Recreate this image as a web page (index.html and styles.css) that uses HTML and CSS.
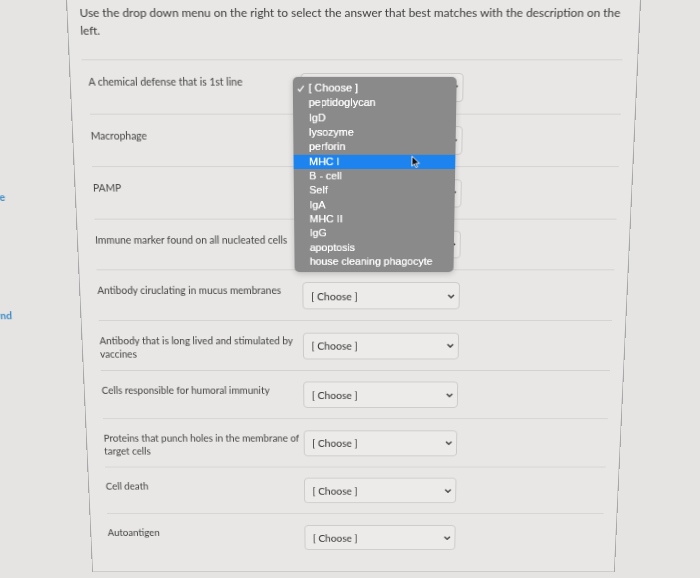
FILE: index.html
```html
<!DOCTYPE html>
<html lang="en">
<head>
  <meta charset="UTF-8">
  <title>Matching Question</title>
  <link rel="stylesheet" href="styles.css">
</head>
<body>
  <div class="stage">
    <div class="side">
      <div class="nav-link first"><span>Home</span></div>
      <div class="nav-link second"><span>Find</span></div>
    </div>

    <div class="card">
      <p class="intro">Use the drop down menu on the right to select the answer that best matches with the description on the left.</p>

      <div class="rows">
        <div class="row">
          <div class="label">A chemical defense that is 1st line</div>
          <div class="select"><span>[ Choose ]</span><svg class="chev" viewBox="0 0 8 5" width="8" height="5"><path d="M1 1l3 3 3-3"/></svg></div>
        </div>
        <div class="row">
          <div class="label">Macrophage</div>
          <div class="select"><span>[ Choose ]</span><svg class="chev" viewBox="0 0 8 5" width="8" height="5"><path d="M1 1l3 3 3-3"/></svg></div>
        </div>
        <div class="row">
          <div class="label">PAMP</div>
          <div class="select"><span>[ Choose ]</span><svg class="chev" viewBox="0 0 8 5" width="8" height="5"><path d="M1 1l3 3 3-3"/></svg></div>
        </div>
        <div class="row">
          <div class="label">Immune marker found on all nucleated cells</div>
          <div class="select"><span>[ Choose ]</span><svg class="chev" viewBox="0 0 8 5" width="8" height="5"><path d="M1 1l3 3 3-3"/></svg></div>
        </div>
        <div class="row">
          <div class="label">Antibody ciruclating in mucus membranes</div>
          <div class="select"><span>[ Choose ]</span><svg class="chev" viewBox="0 0 8 5" width="8" height="5"><path d="M1 1l3 3 3-3"/></svg></div>
        </div>
        <div class="row">
          <div class="label">Antibody that is long lived and stimulated by vaccines</div>
          <div class="select"><span>[ Choose ]</span><svg class="chev" viewBox="0 0 8 5" width="8" height="5"><path d="M1 1l3 3 3-3"/></svg></div>
        </div>
        <div class="row">
          <div class="label">Cells responsible for humoral immunity</div>
          <div class="select"><span>[ Choose ]</span><svg class="chev" viewBox="0 0 8 5" width="8" height="5"><path d="M1 1l3 3 3-3"/></svg></div>
        </div>
        <div class="row">
          <div class="label">Proteins that punch holes in the membrane of target cells</div>
          <div class="select"><span>[ Choose ]</span><svg class="chev" viewBox="0 0 8 5" width="8" height="5"><path d="M1 1l3 3 3-3"/></svg></div>
        </div>
        <div class="row">
          <div class="label">Cell death</div>
          <div class="select"><span>[ Choose ]</span><svg class="chev" viewBox="0 0 8 5" width="8" height="5"><path d="M1 1l3 3 3-3"/></svg></div>
        </div>
        <div class="row">
          <div class="label">Autoantigen</div>
          <div class="select"><span>[ Choose ]</span><svg class="chev" viewBox="0 0 8 5" width="8" height="5"><path d="M1 1l3 3 3-3"/></svg></div>
        </div>
      </div>

      <!-- open native dropdown of the first select -->
      <ul class="menu">
        <li class="checked"><svg class="tick" viewBox="0 0 8 8" width="8" height="8"><path d="M1 4.5l2 2.2L7 1.2"/></svg>[ Choose ]</li>
        <li>peptidoglycan</li>
        <li>IgD</li>
        <li>lysozyme</li>
        <li>perforin</li>
        <li class="active">MHC I</li>
        <li>B - cell</li>
        <li>Self</li>
        <li>IgA</li>
        <li>MHC II</li>
        <li>IgG</li>
        <li>apoptosis</li>
        <li>house cleaning phagocyte</li>
        <svg class="cursor" viewBox="0 0 9 13" width="9" height="13"><path d="M0.5 0.5v10.5l2.6-2.4 1.7 3.9 1.6-0.7-1.7-3.8h3.6z"/></svg>
      </ul>
    </div>
  </div>
</body>
</html>
```

FILE: styles.css
```css
html, body {
  margin: 0;
  padding: 0;
  overflow: hidden;
}

body {
  background-color: #e5e4e2;
  font-family: Lato, 'Liberation Sans', sans-serif;
  color: #444;
}

/* the screen was photographed at an angle, so the whole page leans back */
.stage {
  width: 700px;
  height: 660px;
  display: flex;
  align-items: flex-start;
  transform-origin: 353px 0;
  transform: perspective(400px) rotateX(-3.64deg);
}

.side {
  width: 66px;
  flex-shrink: 0;
  padding-top: 196px;
}

.nav-link {
  width: 0;
  margin-left: -6px;
  display: flex;
  justify-content: flex-end;
  white-space: nowrap;
  line-height: 16px;
  font-size: 11px;
  font-weight: 700;
  color: #3d8cc6;
}

.nav-link.second {
  margin-top: 113px;
}

.card {
  position: relative;
  width: 575px;
  flex-shrink: 0;
  box-sizing: border-box;
  background-color: #e8e7e5;
  border: 1px solid #a8a8a8;
  border-top: none;
  padding-bottom: 13px;
}

.intro {
  margin: 0 15px 0 12px;
  padding: 4px 0 20px;
  font-size: 11.85px;
  line-height: 18px;
  color: #3c3c3c;
  border-bottom: 1px solid #d3d2d0;
}

.rows {
  margin: 0 14px 0 18px;
}

.row {
  box-sizing: border-box;
  height: 55.6px;
  padding-top: 12.7px;
  display: flex;
  align-items: flex-start;
  border-bottom: 1px solid #d3d2d0;
}

.row:last-child {
  border-bottom: none;
}

.label {
  width: 212px;
  margin-top: 2.3px;
  font-size: 10.5px;
  line-height: 14.6px;
  color: #444;
}

.select {
  box-sizing: border-box;
  width: 165px;
  height: 30px;
  margin-left: 3px;
  padding: 0 4px 0 8px;
  display: flex;
  align-items: center;
  justify-content: space-between;
  background-color: #ecebe9;
  border: 1px solid #cbcac8;
  border-radius: 4px;
  font-size: 11px;
  color: #333;
}

.chev path {
  fill: none;
  stroke: #444;
  stroke-width: 1.7;
}

.menu {
  position: absolute;
  left: 225px;
  top: 78px;
  width: 166px;
  margin: 0;
  padding: 4px 0;
  list-style: none;
  background-color: #8a8a8a;
  border-radius: 5px;
  box-shadow: 0 2px 6px rgba(0, 0, 0, 0.18);
  font-family: 'Liberation Sans', Arial, sans-serif;
  font-size: 11px;
  color: #fff;
  text-shadow: 0 0 0.5px #fff;
}

.menu li {
  position: relative;
  height: 15.35px;
  line-height: 15.35px;
  padding-left: 16px;
  white-space: nowrap;
}

.menu li.active {
  background-color: #1d84ef;
}

.tick {
  position: absolute;
  left: 4px;
  top: 4px;
}

.tick path {
  fill: none;
  stroke: #fff;
  stroke-width: 1.2;
}

.cursor {
  position: absolute;
  left: 121px;
  top: 82px;
}

.cursor path {
  fill: #111;
  stroke: #fff;
  stroke-width: 0.9;
}
```
